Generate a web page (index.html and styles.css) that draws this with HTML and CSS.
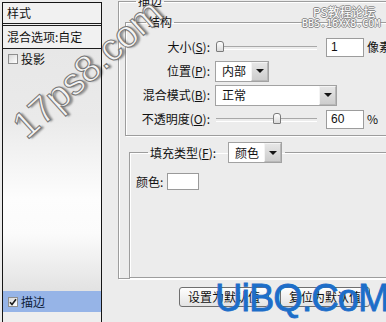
FILE: index.html
```html
<!DOCTYPE html>
<html lang="zh-CN">
<head>
<meta charset="utf-8">
<title>图层样式 - 描边</title>
<link rel="stylesheet" href="styles.css">
</head>
<body>
<div class="dialog">
  <aside class="styles-panel">
    <div class="panel-head">样式</div>
    <div class="panel-blend">混合选项:自定</div>
    <ul class="effect-list">
      <li class="effect"><span class="checkbox"></span>投影</li>
      <li class="effect selected"><span class="checkbox"><svg width="8" height="8" viewBox="0 0 8 8"><path d="M1 4.2 L3 6.5 L7 1.2" fill="none" stroke="#1b1b1b" stroke-width="1.6"/></svg></span>描边</li>
      <li class="effect-rest"></li>
    </ul>
  </aside>
  <main class="content">
    <fieldset class="group group-outer">
      <legend>描边</legend>
      <fieldset class="group group-struct">
        <legend>结构</legend>
        <div class="form-grid">
          <label>大小(<u>S</u>):</label>
          <div class="ctrl">
            <div class="slider"><span class="thumb" style="left:1px"></span></div>
            <div class="textbox">1</div>
            <span class="unit">像素</span>
          </div>
          <label>位置(<u>P</u>):</label>
          <div class="ctrl">
            <div class="select select-small"><span class="value">内部</span><span class="arrow"></span></div>
          </div>
          <label>混合模式(<u>B</u>):</label>
          <div class="ctrl">
            <div class="select select-wide"><span class="value">正常</span><span class="arrow"></span></div>
          </div>
          <label>不透明度(<u>O</u>):</label>
          <div class="ctrl">
            <div class="slider"><span class="thumb" style="left:58px"></span></div>
            <div class="textbox">60</div>
            <span class="unit">%</span>
          </div>
        </div>
      </fieldset>
      <fieldset class="group group-fill">
        <legend class="fill-legend">
          <span>填充类型(<u>F</u>):</span>
          <span class="select select-small"><span class="value">颜色</span><span class="arrow"></span></span>
        </legend>
        <div class="color-row">
          <span>颜色:</span>
          <span class="swatch"></span>
        </div>
      </fieldset>
    </fieldset>
    <div class="buttons">
      <button class="btn" type="button">设置为默认值</button>
      <button class="btn" type="button">复位为默认值</button>
    </div>
  </main>
</div>

<div class="wm-17ps8">17ps8.com</div>
<div class="wm-bbs"><div class="l1">PS教程论坛</div><div class="l2">BBS.16XX8.COM</div></div>
<div class="wm-uibq">UiBQ.CoM</div>
</body>
</html>
```

FILE: styles.css
```css
* { box-sizing: border-box; }
html, body { margin: 0; padding: 0; }
body {
  width: 386px;
  height: 322px;
  overflow: hidden;
  position: relative;
  background: #ececec;
  font-family: "Noto Sans CJK SC", "Noto Sans", sans-serif;
  font-size: 12px;
  line-height: 14px;
  color: #111;
}
u { text-decoration: underline; text-underline-offset: 1px; }

.dialog {
  display: flex;
  align-items: flex-start;
  padding: 2px 0 0 2px;
}

/* left styles list */
.styles-panel {
  flex: none;
  width: 100px;
  height: 340px;
  border: 1px solid #161616;
  border-bottom: 0;
  display: flex;
  flex-direction: column;
  background: #ededed;
}
.panel-head {
  height: 23px;
  padding-left: 4px;
  display: flex;
  align-items: center;
  background: #f1f1f1;
  border-bottom: 3px double #1d1d1d;
}
.panel-blend {
  height: 23px;
  padding-left: 4px;
  display: flex;
  align-items: center;
  background: #f1f1f1;
  border-bottom: 1px solid #1d1d1d;
}
.effect-list {
  list-style: none;
  margin: 0;
  padding: 0;
  flex: 1;
  display: flex;
  flex-direction: column;
  background: linear-gradient(#e7e7e7 0, #eaeaea 70px, #fdfdfd 150px, #fbfbfb 185px, #e3e3e3 240px);
}
.effect {
  height: 20px;
  display: flex;
  align-items: center;
  gap: 3px;
  padding-left: 5px;
}
.effect.selected {
  margin-top: 222px;
  height: 21px;
  background: #96b4e7;
  color: #0d1c3a;
}
.effect-rest { flex: 1; background: #eeeeee; }
.checkbox {
  width: 10px;
  height: 10px;
  border: 1px solid #8e8e8e;
  background: linear-gradient(135deg, #d8d8d8, #ffffff);
  display: flex;
  align-items: center;
  justify-content: center;
}

/* right content */
.content {
  flex: none;
  width: 300px;
  margin-left: 16px;
}
.group {
  margin: 0;
  min-width: 0;
  border: 1px solid #9d9d9d;
  box-shadow: inset 1px 1px 0 #fff, 1px 1px 0 #fff;
}
.group > legend { padding: 0 2px; line-height: 14px; }

.group-outer {
  margin-top: -8px;
  padding: 7px 0 0 6px;
}
.group-outer > legend { margin-left: 11px; }

.group-struct { padding: 6px 0 4px 0; }
.group-struct > legend { margin-left: 20px; }

.form-grid {
  display: grid;
  grid-template-columns: 84px 1fr;
  column-gap: 5px;
  grid-auto-rows: 24px;
  align-items: center;
}
.form-grid label { text-align: right; white-space: nowrap; }
.ctrl { display: flex; align-items: center; }

.slider {
  position: relative;
  width: 104px;
  height: 12px;
  margin-right: 7px;
}
.slider::before {
  content: "";
  position: absolute;
  left: 1px;
  right: 2px;
  top: 5px;
  height: 2px;
  border-top: 1px solid #a8a8a8;
  border-bottom: 1px solid #ffffff;
}
.thumb {
  position: absolute;
  top: 0;
  width: 8px;
  height: 11px;
  border: 1px solid #7a7a7a;
  border-radius: 3px 3px 1px 1px;
  background: linear-gradient(#ffffff, #d9d9d9);
}
.textbox {
  width: 38px;
  height: 19px;
  border: 1px solid #9c9c9c;
  background: #fff;
  padding-left: 4px;
  display: flex;
  align-items: center;
  font-family: "Liberation Sans", sans-serif;
}
.unit { margin-left: 3px; white-space: nowrap; }

.select {
  display: flex;
  height: 21px;
  border: 1px solid #a2a2a2;
  background: #fff;
}
.select-small { width: 54px; }
.select-wide { width: 122px; }
.select .value {
  flex: 1;
  padding-left: 6px;
  display: flex;
  align-items: center;
}
.select .arrow {
  width: 17px;
  border: 1px solid #f4f4f4;
  border-right-color: #b8b8b8;
  border-bottom-color: #b8b8b8;
  background: linear-gradient(#e6e6e6, #cdcdcd);
  display: flex;
  align-items: center;
  justify-content: center;
}
.select .arrow::after {
  content: "";
  border-left: 4px solid transparent;
  border-right: 4px solid transparent;
  border-top: 4px solid #151515;
}

.group-fill {
  margin: 6px 0 0 4px;
  padding: 10px 0 87px 6px;
}
.group > legend.fill-legend {
  display: flex;
  align-items: center;
  gap: 12px;
  margin-left: 12px;
  padding: 0 3px 0 2px;
}
.color-row {
  display: flex;
  align-items: center;
  gap: 4px;
  height: 17px;
}
.swatch {
  width: 32px;
  height: 17px;
  background: #fff;
  border: 1px solid #9a9a9a;
}

.buttons {
  display: flex;
  gap: 11px;
  padding-left: 61px;
  margin-top: 8px;
}
.btn {
  width: 90px;
  height: 20px;
  padding: 0;
  border: 1px solid #6f6f6f;
  border-radius: 3px;
  background: linear-gradient(#fefefe, #e3e3e3);
  font: inherit;
  color: #111;
  display: flex;
  align-items: center;
  justify-content: center;
}

/* watermarks over the dialog */
.wm-17ps8 {
  position: absolute;
  left: 31px;
  top: 107px;
  font-family: "Liberation Sans", sans-serif;
  font-size: 38px;
  line-height: 38px;
  color: #f4f4f4;
  -webkit-text-stroke: 1px #777;
  text-shadow: 2px 2px 2px rgba(0, 0, 0, 0.4);
  transform: rotate(-42deg);
  transform-origin: 0 100%;
  white-space: nowrap;
}
.wm-bbs {
  position: absolute;
  left: 302px;
  top: 5px;
  color: #fff;
  text-shadow: 1px 0 #8a8a8a, -1px 0 #8a8a8a, 0 1px #8a8a8a, 0 -1px #8a8a8a;
}
.wm-bbs .l1 { padding-left: 11px; font-size: 12px; line-height: 13px; }
.wm-bbs .l2 { font: 10px/11px "DejaVu Sans Mono", monospace; }
.wm-uibq {
  position: absolute;
  left: 215px;
  top: 279px;
  font-family: "Liberation Sans", sans-serif;
  font-size: 38px;
  line-height: 38px;
  letter-spacing: -1px;
  color: #1d6ec9;
  -webkit-text-stroke: 0.8px #1d6ec9;
  white-space: nowrap;
}
```
